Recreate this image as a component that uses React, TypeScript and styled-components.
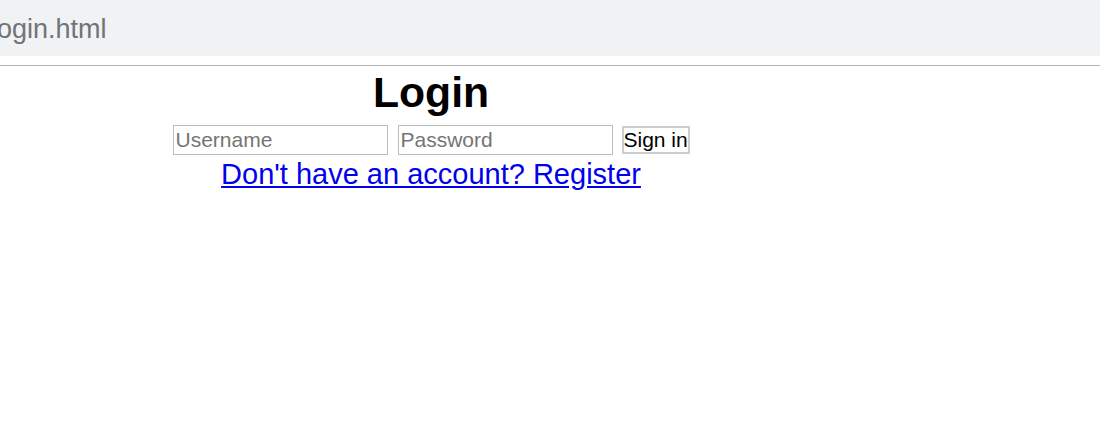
import React from 'react';
import styled, { createGlobalStyle } from 'styled-components';

const GlobalStyle = createGlobalStyle`
	body {
		margin: 0;
		background: #fff;
		font-family: "Liberation Sans", Arial, sans-serif;
	}
`;

const TopBar = styled.div`
	height: 56px;
	background: #f1f2f4;
	display: flex;
	align-items: center;
	overflow: hidden;
	border-bottom: 9px solid #fff;
`;

const FileName = styled.span`
	margin-left: -9px;
	margin-top: 2px;
	font-size: 27px;
	color: #707478;
	white-space: nowrap;
`;

const Divider = styled.hr`
	margin: 0;
	border: 0;
	height: 1px;
	background: #b4b4b4;
`;

const Main = styled.main`
	width: 862px;
	text-align: center;
`;

const Title = styled.h1`
	margin: 0;
	padding-top: 2px;
	font-size: 42.7px;
	line-height: 49px;
	font-weight: bold;
	color: #000;
`;

const Form = styled.form`
	display: flex;
	justify-content: center;
	align-items: center;
	margin-top: 8px;
	height: 30px;
`;

const Field = styled.input`
	box-sizing: border-box;
	width: 215px;
	height: 30px;
	margin-right: ${(p: { $gap: number }) => p.$gap}px;
	padding: 0 2px;
	border: 1px solid #bdbdbd;
	font-family: "Liberation Sans", Arial, sans-serif;
	font-size: 21px;
	color: #000;
	outline: none;
	&::placeholder {
		color: #757575;
	}
`;

const Button = styled.button`
	box-sizing: border-box;
	width: 68px;
	height: 28px;
	padding: 0;
	border: 2px solid #cdcdcd;
	background: #fff;
	font-family: "Liberation Sans", Arial, sans-serif;
	font-size: 21px;
	color: #000;
	white-space: nowrap;
	overflow: visible;
`;

const RegisterLink = styled.a`
	display: inline-block;
	margin-top: 3px;
	font-size: 29px;
	line-height: 33px;
	color: #0000ee;
	text-decoration: underline;
`;

export default function App() {
	return (
		<>
			<GlobalStyle />
			<TopBar>
				<FileName>login.html</FileName>
			</TopBar>
			<Divider />
			<Main>
				<Title>Login</Title>
				<Form onSubmit={(e) => e.preventDefault()}>
					<Field $gap={10} type="text" placeholder="Username" />
					<Field $gap={9} type="password" placeholder="Password" />
					<Button type="submit">Sign in</Button>
				</Form>
				<RegisterLink href="#register">Don't have an account? Register</RegisterLink>
			</Main>
		</>
	);
}
